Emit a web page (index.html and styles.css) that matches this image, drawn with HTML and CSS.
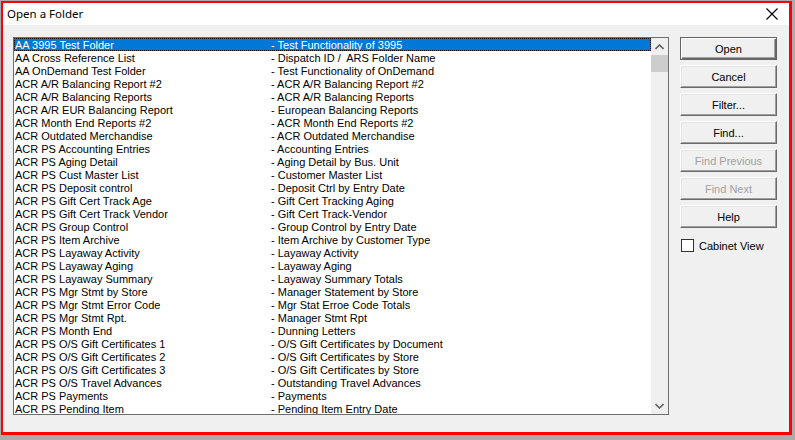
FILE: index.html
```html
<!DOCTYPE html>
<html>
<head>
<meta charset="utf-8">
<link rel="stylesheet" href="styles.css">
</head>
<body>
<div class="window">
  <div class="titlebar">
    <span class="title">Open a Folder</span>
    <svg class="close" width="12" height="12" viewBox="0 0 12 12"><path d="M0.5 0.5 L11.5 11.5 M11.5 0.5 L0.5 11.5" stroke="#000" stroke-width="1.1" fill="none"/></svg>
  </div>
  <div class="content">
    <div class="listbox">
      <div class="rows">
        <div class="row selected"><span class="c1">AA 3995 Test Folder</span><span class="c2">- Test Functionality of 3995</span></div>
        <div class="row"><span class="c1">AA Cross Reference List</span><span class="c2">- Dispatch ID /  ARS Folder Name</span></div>
        <div class="row"><span class="c1">AA OnDemand Test Folder</span><span class="c2">- Test Functionality of OnDemand</span></div>
        <div class="row"><span class="c1">ACR A/R Balancing Report #2</span><span class="c2">- ACR A/R Balancing Report #2</span></div>
        <div class="row"><span class="c1">ACR A/R Balancing Reports</span><span class="c2">- ACR A/R Balancing Reports</span></div>
        <div class="row"><span class="c1">ACR A/R EUR Balancing Report</span><span class="c2">- European Balancing Reports</span></div>
        <div class="row"><span class="c1">ACR Month End Reports #2</span><span class="c2">- ACR Month End Reports #2</span></div>
        <div class="row"><span class="c1">ACR Outdated Merchandise</span><span class="c2">- ACR Outdated Merchandise</span></div>
        <div class="row"><span class="c1">ACR PS Accounting Entries</span><span class="c2">- Accounting Entries</span></div>
        <div class="row"><span class="c1">ACR PS Aging Detail</span><span class="c2">- Aging Detail by Bus. Unit</span></div>
        <div class="row"><span class="c1">ACR PS Cust Master List</span><span class="c2">- Customer Master List</span></div>
        <div class="row"><span class="c1">ACR PS Deposit control</span><span class="c2">- Deposit Ctrl by Entry Date</span></div>
        <div class="row"><span class="c1">ACR PS Gift Cert Track Age</span><span class="c2">- Gift Cert Tracking Aging</span></div>
        <div class="row"><span class="c1">ACR PS Gift Cert Track Vendor</span><span class="c2">- Gift Cert Track-Vendor</span></div>
        <div class="row"><span class="c1">ACR PS Group Control</span><span class="c2">- Group Control by Entry Date</span></div>
        <div class="row"><span class="c1">ACR PS Item Archive</span><span class="c2">- Item Archive by Customer Type</span></div>
        <div class="row"><span class="c1">ACR PS Layaway Activity</span><span class="c2">- Layaway Activity</span></div>
        <div class="row"><span class="c1">ACR PS Layaway Aging</span><span class="c2">- Layaway Aging</span></div>
        <div class="row"><span class="c1">ACR PS Layaway Summary</span><span class="c2">- Layaway Summary Totals</span></div>
        <div class="row"><span class="c1">ACR PS Mgr Stmt by Store</span><span class="c2">- Manager Statement by Store</span></div>
        <div class="row"><span class="c1">ACR PS Mgr Stmt Error Code</span><span class="c2">- Mgr Stat Erroe Code Totals</span></div>
        <div class="row"><span class="c1">ACR PS Mgr Stmt Rpt.</span><span class="c2">- Manager Stmt Rpt</span></div>
        <div class="row"><span class="c1">ACR PS Month End</span><span class="c2">- Dunning Letters</span></div>
        <div class="row"><span class="c1">ACR PS O/S Gift Certificates 1</span><span class="c2">- O/S Gift Certificates by Document</span></div>
        <div class="row"><span class="c1">ACR PS O/S Gift Certificates 2</span><span class="c2">- O/S Gift Certificates by Store</span></div>
        <div class="row"><span class="c1">ACR PS O/S Gift Certificates 3</span><span class="c2">- O/S Gift Certificates by Store</span></div>
        <div class="row"><span class="c1">ACR PS O/S Travel Advances</span><span class="c2">- Outstanding Travel Advances</span></div>
        <div class="row"><span class="c1">ACR PS Payments</span><span class="c2">- Payments</span></div>
        <div class="row"><span class="c1">ACR PS Pending Item</span><span class="c2">- Pending Item Entry Date</span></div>
      </div>
      <div class="scrollbar">
        <div class="arrow">
          <svg width="9" height="6" viewBox="0 0 9 6"><path d="M0.5 5 L4.5 1 L8.5 5" stroke="#606060" stroke-width="1.6" fill="none"/></svg>
        </div>
        <div class="thumb"></div>
        <div class="track"></div>
        <div class="arrow">
          <svg width="9" height="6" viewBox="0 0 9 6"><path d="M0.5 1 L4.5 5 L8.5 1" stroke="#606060" stroke-width="1.6" fill="none"/></svg>
        </div>
      </div>
    </div>
    <div class="buttons">
      <div class="btn default">Open</div>
      <div class="btn">Cancel</div>
      <div class="btn">Filter...</div>
      <div class="btn">Find...</div>
      <div class="btn disabled">Find Previous</div>
      <div class="btn disabled">Find Next</div>
      <div class="btn">Help</div>
      <label class="check"><span class="box"></span><span>Cabinet View</span></label>
    </div>
  </div>
</div>
</body>
</html>
```

FILE: styles.css
```css
html, body {
  margin: 0;
  padding: 0;
}
body {
  background: #ababab;
  width: 795px;
  height: 440px;
  overflow: hidden;
}
.window {
  margin: 1px 0 0 1px;
  width: 791px;
  height: 434px;
  box-sizing: border-box;
  border-style: solid;
  border-color: #ff0000;
  border-width: 2px 3px 3px 2px;
  background: #f0f0f0;
  display: flex;
  flex-direction: column;
}
.titlebar {
  height: 22px;
  background: #ffffff;
  display: flex;
  align-items: center;
  justify-content: space-between;
  padding: 0 11px 0 4px;
  flex: none;
}
.title {
  font-family: "Noto Sans", "Open Sans", sans-serif;
  font-size: 11.5px;
  color: #000;
  line-height: 16px;
}
.close {
  display: block;
  margin-top: -1px;
}
.content {
  flex: 1;
  display: flex;
  padding: 12px 12px 0 10px;
  gap: 11px;
  font-family: "Liberation Sans", Arial, sans-serif;
  font-size: 11px;
}
.listbox {
  width: 656px;
  height: 378px;
  box-sizing: border-box;
  border: 1px solid #6e6e6e;
  background: #fff;
  display: flex;
  overflow: hidden;
}
.rows {
  flex: 1;
  overflow: hidden;
}
.row {
  height: 13px;
  box-sizing: border-box;
  padding-top: 1px;
  line-height: 12px;
  display: flex;
  white-space: pre;
  color: #000;
  padding-left: 1px;
}
.row.selected {
  background: #0078d7;
  color: #fff;
  outline: 1px dotted #000;
  outline-offset: -1px;
}
.c1 {
  width: 256px;
  flex: none;
}
.scrollbar {
  width: 17px;
  flex: none;
  background: #f0f0f0;
  display: flex;
  flex-direction: column;
}
.arrow {
  height: 17px;
  display: flex;
  align-items: center;
  justify-content: center;
  flex: none;
}
.arrow svg {
  display: block;
}
.thumb {
  height: 17px;
  background: #cdcdcd;
  flex: none;
}
.track {
  flex: 1;
}
.buttons {
  width: 97px;
  display: flex;
  flex-direction: column;
  gap: 5px;
}
.btn {
  height: 23px;
  box-sizing: border-box;
  display: flex;
  align-items: center;
  justify-content: center;
  background: #f0f0f0;
  color: #000;
  border: 1px solid;
  border-color: #ffffff #696969 #696969 #ffffff;
  box-shadow: inset -1px -1px 0 #a0a0a0, inset 1px 1px 0 #e3e3e3;
}
.btn.default {
  border-color: #646464;
  box-shadow: inset 1px 1px 0 #ffffff, inset -1px -1px 0 #696969, inset -2px -2px 0 #a0a0a0;
}
.btn.disabled {
  color: #a0a0a0;
}
.check {
  display: flex;
  align-items: center;
  gap: 5px;
  margin-top: 6px;
  padding-left: 1px;
}
.box {
  width: 13px;
  height: 13px;
  box-sizing: border-box;
  border: 1px solid #333;
  background: #fff;
}
```
